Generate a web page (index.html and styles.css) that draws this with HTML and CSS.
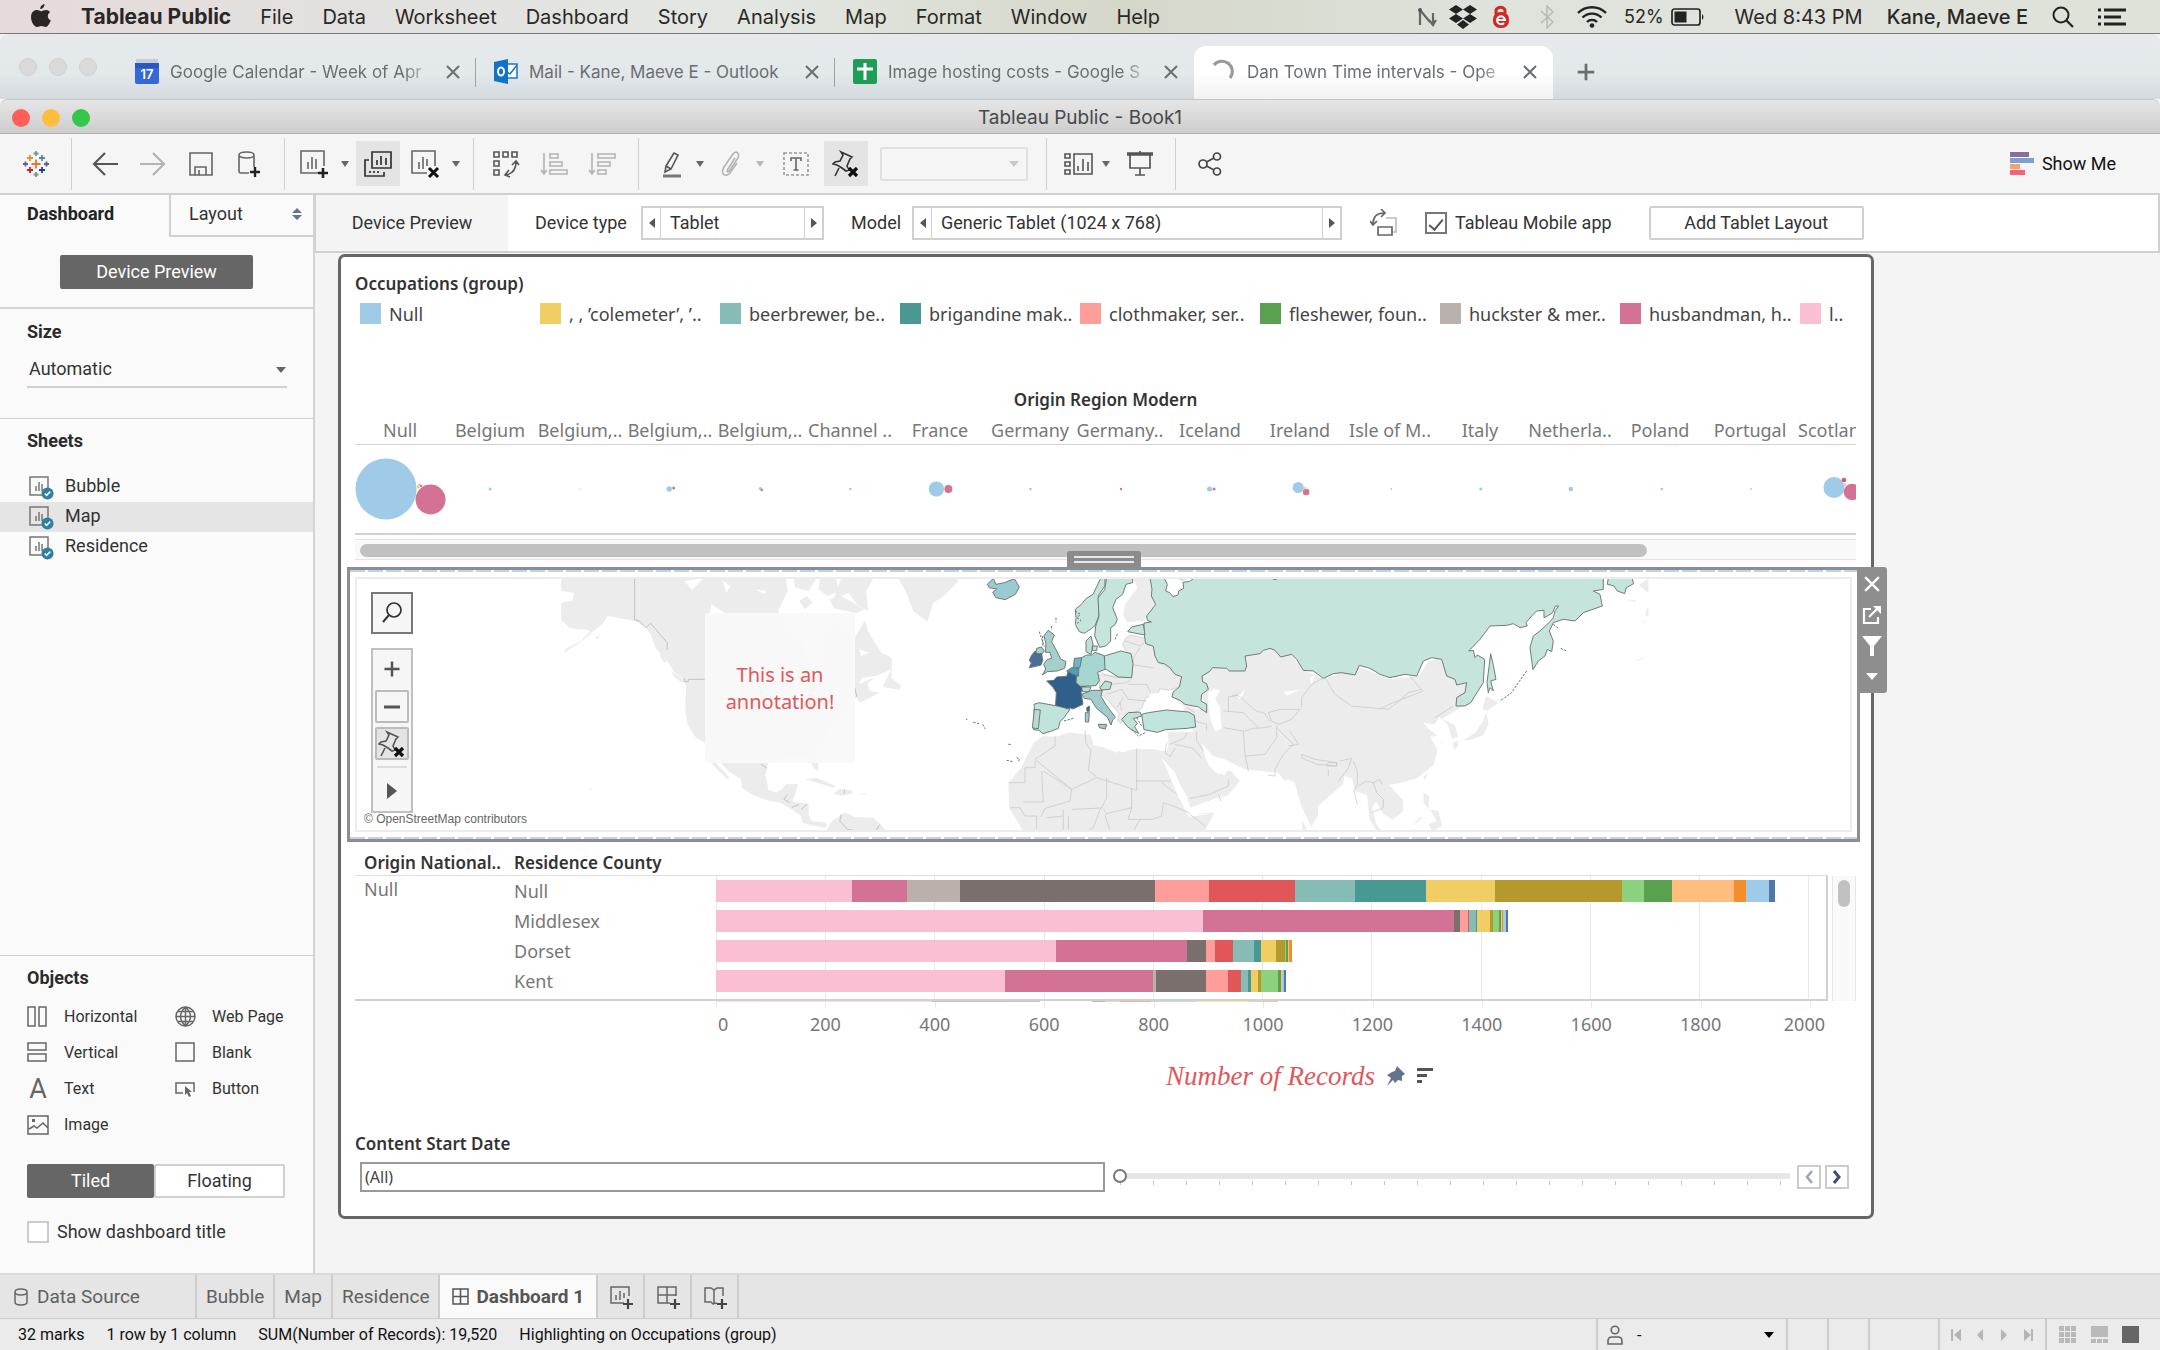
FILE: index.html
```html
<!DOCTYPE html>
<html lang="en">
<head>
<meta charset="utf-8">
<title>Tableau Public - Book1</title>
<link rel="stylesheet" href="styles.css">
</head>
<body>
<svg class="defs" aria-hidden="true">
  <symbol id="sheet" viewBox="0 0 24 24"><path d="M15 19H1V1h18v11M7 10v5M10 6v9M13 8v7" fill="none" stroke="currentColor" stroke-width="1.5"/></symbol>
  <symbol id="plus" viewBox="0 0 24 24"><path d="M12 3v18M3 12h18" fill="none" stroke="currentColor" stroke-width="3"/></symbol>
  <symbol id="close" viewBox="0 0 14 14"><path d="M1 1l12 12M13 1L1 13" fill="none" stroke="currentColor" stroke-width="2"/></symbol>
  <symbol id="pinx" viewBox="0 0 28 28"><path d="M9 2l11 5-2 2-3 7 2 4-3 1-4-3-5-3-4-1 2-2 5-1 3-6zM7 18l-4 8" fill="none" stroke="currentColor" stroke-width="1.6"/><path d="M17 18l8 8M25 18l-8 8" stroke="#111" stroke-width="3.2"/></symbol>
  <symbol id="tick" viewBox="0 0 14 14"><circle cx="7" cy="7" r="6.5" fill="#2f7fa3"/><path d="M4 7l2 2 4-4" fill="none" stroke="#fff" stroke-width="1.6"/></symbol>
</svg>

<header class="menubar">
  <svg class="apple" width="20" height="24" viewBox="0 0 20 24"><path d="M13.500 0c.2 2.500-1.700 5-4.200 5C9 2.700 11.200.4 13.500 0zM19 8.200c-3.200 2-2.700 6.700.8 8.100-.9 2.700-2.900 6.700-5.200 6.700-1.600 0-2.200-1-4.200-1s-2.600 1-4.200 1C3 23 0 17.500 0 13c0-4.600 3-7 5.800-7 1.800 0 3.200 1.200 4.400 1.200 1.100 0 2.800-1.300 5-1.200 1.600.1 2.900.8 3.800 2.200z" fill="#2b2624"/></svg>
  <nav class="menus">
    <b>Tableau Public</b><span>File</span><span>Data</span><span>Worksheet</span><span>Dashboard</span><span>Story</span><span>Analysis</span><span>Map</span><span>Format</span><span>Window</span><span>Help</span>
  </nav>
  <div class="tray">
    <svg width="20" height="20" viewBox="0 0 20 20"><path d="M3 18V4M3 3l10 12M16 6v10M12 13l4 5 3-5" fill="none" stroke="#666" stroke-width="2.200"/><circle cx="3" cy="3" r="2" fill="#555"/></svg>
    <svg class="t-drop" width="28" height="24" viewBox="0 0 28 24"><path d="M7 0l7 4.500L7 9 0 4.500zM21 0l7 4.500L21 9l-7-4.500zM7 9l7 4.500L7 18l-7-4.500zM21 9l7 4.500-7 4.500-7-4.500zM14 15l6 4.500-6 4.500-6-4.500z" fill="#222"/></svg>
    <svg class="t-e" width="18" height="24" viewBox="0 0 18 24"><path d="M4 9V5a5 5 0 0 1 9 0v3" fill="none" stroke="#cf2a27" stroke-width="3"/><rect x="1" y="7" width="16" height="16" rx="7" fill="#cf2a27"/><path d="M5 15h8a4 4 0 1 0-1 3" fill="none" stroke="#fff" stroke-width="2"/></svg>
    <svg class="t-bt" width="14" height="24" viewBox="0 0 14 24"><path d="M1 6l12 11-6 6V1l6 6L1 18" fill="none" stroke="#b6bab4" stroke-width="1.500"/></svg>
    <svg class="t-wifi" width="32" height="22" viewBox="0 0 32 22"><path d="M2 7a20 20 0 0 1 28 0M6.500 11.500a13.500 13.500 0 0 1 19 0M11 16a7 7 0 0 1 10 0" fill="none" stroke="#222" stroke-width="2.400"/><circle cx="16" cy="19.500" r="2.300" fill="#222"/></svg>
    <span class="t-pct">52%</span>
    <svg class="t-bat" width="34" height="18" viewBox="0 0 34 18"><rect x="1" y="1" width="28" height="16" rx="2.500" fill="none" stroke="#222" stroke-width="1.700"/><rect x="3.500" y="3.500" width="12" height="11" fill="#222"/><path d="M31 6q3 3 0 6z" fill="#222"/></svg>
    <span class="t-time">Wed 8:43 PM</span>
    <span class="t-user">Kane, Maeve E</span>
    <svg class="t-find" width="22" height="22" viewBox="0 0 22 22"><circle cx="9" cy="9" r="7.500" fill="none" stroke="#222" stroke-width="2"/><path d="M14.500 14.500L21 21" stroke="#222" stroke-width="2.200"/></svg>
    <svg width="28" height="18" viewBox="0 0 28 18"><path d="M0 2h3M6 2h22M0 9h3M6 9h17M0 16h3M6 16h22" stroke="#222" stroke-width="3"/></svg>
  </div>
</header>

<section class="browser">
  <div class="lights idle"><i></i><i></i><i></i></div>
  <div class="btab"><svg width="24" height="25" viewBox="0 0 24 25"><path d="M1 0h22v5H1z" fill="#c9ccd1"/><path d="M0 4h24v19a2 2 0 0 1-2 2H2a2 2 0 0 1-2-2z" fill="#3567d6"/><path d="M0 4h24v5H0z" fill="#2a56c6"/><text x="12" y="20" text-anchor="middle" class="cal">17</text></svg><span class="fade">Google Calendar - Week of Apr</span><svg class="x"><use href="#close"/></svg></div>
  <div class="btab"><svg width="24" height="25" viewBox="0 0 24 25"><path d="M13 5h10v14H13" fill="#fff" stroke="#1976c9" stroke-width="1.500"/><path d="M13 13l3 2 7-9" fill="none" stroke="#1976c9" stroke-width="1.500"/><path d="M0 3l14-3v25L0 22z" fill="#1073c8"/><ellipse cx="7" cy="12.500" rx="3" ry="4" fill="none" stroke="#fff" stroke-width="2"/></svg><span>Mail - Kane, Maeve E - Outlook</span><svg class="x"><use href="#close"/></svg></div>
  <div class="btab last"><svg width="24" height="25" viewBox="0 0 24 25"><rect width="24" height="25" rx="2" fill="#1f9d58"/><path d="M12 4v17M4 10h16" stroke="#fff" stroke-width="3"/></svg><span class="fade">Image hosting costs - Google S</span><svg class="x"><use href="#close"/></svg></div>
  <div class="btab active"><svg width="24" height="25" viewBox="0 0 24 25"><path d="M2 6a10 10 0 0 1 16 13" fill="none" stroke="#999" stroke-width="3"/></svg><span class="fade">Dan Town Time intervals - Ope</span><svg class="x"><use href="#close"/></svg></div>
  <svg class="newtab"><use href="#plus"/></svg>
</section>

<header class="titlebar"><div class="lights"><i></i><i></i><i></i></div><h1>Tableau Public - Book1</h1></header>

<div class="toolbar">
  <div class="group g1"><button aria-label="Start page"><svg width="26" height="26" viewBox="0 0 26 26" fill="none" stroke-width="1.800"><path d="M13 8.500v9M8.500 13h9" stroke="#e8762c"/><path d="M7 4v6M4 7h6" stroke="#eb912c"/><path d="M19 4v6M16 7h6" stroke="#59879b"/><path d="M7 16v6M4 19h6" stroke="#c72035"/><path d="M19 16v6M16 19h6" stroke="#1f457e"/><path d="M13 0v5M10.500 2.500h5M13 21v5M10.500 23.500h5" stroke="#7199a6"/><path d="M2.500 10.500v5M0 13h5M23.500 10.500v5M21 13h5" stroke="#5b6591"/></svg></button></div>
  <div class="group g2">
    <button aria-label="Undo"><svg width="26" height="24" viewBox="0 0 26 24"><path d="M26 12H2M13 1L2 12l11 11" fill="none" stroke="#555" stroke-width="2.200"/></svg></button>
    <button aria-label="Redo"><svg width="26" height="24" viewBox="0 0 26 24"><path d="M0 12h24M13 1l11 11-11 11" fill="none" stroke="#b3b3b3" stroke-width="2.200"/></svg></button>
    <button aria-label="Save"><svg width="24" height="24" viewBox="0 0 24 24"><path d="M1 1h22v22H1zM6 23v-8h11v8M10 18v5" fill="none" stroke="#666" stroke-width="1.600"/></svg></button>
    <button aria-label="New data source"><svg width="24" height="26" viewBox="0 0 24 26"><path d="M12 22H4q-2 0-2-2V4c0-4 15-4 15 0s-15 4-15 0M17 4v12" fill="none" stroke="#666" stroke-width="1.600"/><path d="M18 16v10M13 21h10" stroke="#222" stroke-width="2.400"/></svg></button>
  </div>
  <div class="group g3">
    <button class="mid" aria-label="New worksheet"><svg width="30" height="28" viewBox="0 0 30 28"><path d="M19 23H2V1h23v15M9 12v7M13 7v12M17 9v10" fill="none" stroke="#666" stroke-width="1.600"/><path d="M24 18v10M19 23h10" stroke="#222" stroke-width="2.600"/></svg></button><button class="caret" aria-label="More sheets"></button>
    <button class="mid on" aria-label="Duplicate"><svg width="28" height="26" viewBox="0 0 28 26"><path d="M8 1h19v16H8zM13 9v5M17 5v9M22 7v7M5 9H1v16h19v-4M6 20v2M10 20v2M14 20v2" fill="none" stroke="#333" stroke-width="1.700"/></svg></button>
    <button class="mid" aria-label="Clear sheet"><svg width="30" height="28" viewBox="0 0 30 28"><path d="M17 23H2V1h23v15M9 12v7M13 7v12M17 9v7" fill="none" stroke="#666" stroke-width="1.600"/><path d="M19 18l9 9M28 18l-9 9" stroke="#111" stroke-width="3"/></svg></button><button class="caret" aria-label="Clear options"></button>
  </div>
  <div class="group g4">
    <button aria-label="Swap rows and columns"><svg width="28" height="28" viewBox="0 0 28 28"><path d="M2 2h5v5H2zM11 2h5v5h-5zM20 2h5v5h-5zM2 11h5v5H2zM2 20h5v5H2zM24 12q0 11-10 13M20 15l4-4 3 4M17 20l-4 5 5 2" fill="none" stroke="#555" stroke-width="1.600"/></svg></button>
    <button aria-label="Sort ascending"><svg width="28" height="24" viewBox="0 0 28 24"><path d="M4 1v20M1 18l3 4 3-4M10 2h8v4h-8zM10 10h12v4H10zM10 18h17v4H10z" fill="none" stroke="#b3b3b3" stroke-width="1.600"/></svg></button>
    <button aria-label="Sort descending"><svg width="28" height="24" viewBox="0 0 28 24"><path d="M4 1v20M1 18l3 4 3-4M10 2h17v4H10zM10 10h12v4H10zM10 18h8v4h-8z" fill="none" stroke="#b3b3b3" stroke-width="1.600"/></svg></button>
  </div>
  <div class="group g5">
    <button class="slim" aria-label="Highlight"><svg width="22" height="28" viewBox="0 0 22 28"><path d="M6 16L14 3l4 2-7 14-6 3zM6 16l5 3" fill="none" stroke="#555" stroke-width="1.600"/><path d="M3 26h18" stroke="#777" stroke-width="3"/></svg></button><button class="caret" aria-label="Highlight options"></button>
    <button class="slim" aria-label="Group"><svg width="20" height="26" viewBox="0 0 20 26"><path d="M14 7L7 18c-2 3 0 4 2 1l8-12c2-5-2-8-5-4L3 16c-4 7 2 11 6 6l7-10" fill="none" stroke="#b3b3b3" stroke-width="1.600"/></svg></button><button class="caret dim" aria-label="Group options"></button>
    <button aria-label="Show labels"><svg width="26" height="24" viewBox="0 0 26 24"><rect x="1" y="1" width="24" height="22" fill="none" stroke="#999" stroke-width="1.600" stroke-dasharray="3 2"/><path d="M8 9V6h10v3M13 6v12M10.500 18h5" fill="none" stroke="#666" stroke-width="1.600"/></svg></button>
    <button class="mid on" aria-label="Unpin axes"><svg width="28" height="28"><use href="#pinx"/></svg></button>
    <div class="fit"><select aria-label="Fit" disabled><option></option></select></div>
  </div>
  <div class="group g6">
    <button class="slim" aria-label="Show cards"><svg width="30" height="22" viewBox="0 0 30 22"><path d="M1 1h5v4H1zM1 9h5v4H1zM1 17h5v4H1zM10 1h18v20H10zM14 13v5M19 6v12M24 9v9" fill="none" stroke="#555" stroke-width="1.600"/></svg></button><button class="caret" aria-label="Card options"></button>
    <button aria-label="Presentation mode"><svg width="26" height="26" viewBox="0 0 26 26"><path d="M0 3h26" stroke="#555" stroke-width="3.500"/><path d="M3 4v13h20V4M13 0v2M13 17v7M8 24h10" fill="none" stroke="#555" stroke-width="1.700"/></svg></button>
  </div>
  <div class="group g7"><button aria-label="Share"><svg width="24" height="24" viewBox="0 0 24 24" fill="none" stroke="#444" stroke-width="1.700"><circle cx="5" cy="12" r="4"/><circle cx="19" cy="4.500" r="3.500"/><circle cx="19" cy="19.500" r="3.500"/><path d="M8.500 10l7.500-4M8.500 14l7.500 4"/></svg></button></div>
  <button class="showme"><svg width="24" height="24" viewBox="0 0 24 24"><path d="M0 0h19v5H0z" fill="#8a6d9b"/><path d="M0 6h24v5H0z" fill="#7ba2cd"/><path d="M0 12h10v5H0z" fill="#f9a073"/><path d="M0 18h15v5H0z" fill="#fb6277"/></svg>Show Me</button>
</div>

<main class="main">
  <aside class="side">
    <div class="ptabs"><button class="ptab cur">Dashboard</button><button class="ptab">Layout<svg width="10" height="12" viewBox="0 0 10 12"><path d="M0 5l5-5 5 5zM0 7h10l-5 5z" fill="#64748b"/></svg></button></div>
    <section class="pv"><button class="dark wide">Device Preview</button></section>
    <section class="size"><h2><label for="size">Size</label></h2><select id="size"><option>Automatic</option></select></section>
    <section class="sheets"><h2>Sheets</h2>
      <ul>
        <li><span class="sicon"><svg width="24" height="24"><use href="#sheet"/></svg><svg class="ok"><use href="#tick"/></svg></span>Bubble</li>
        <li class="sel"><span class="sicon"><svg width="24" height="24"><use href="#sheet"/></svg><svg class="ok"><use href="#tick"/></svg></span>Map</li>
        <li><span class="sicon"><svg width="24" height="24"><use href="#sheet"/></svg><svg class="ok"><use href="#tick"/></svg></span>Residence</li>
      </ul>
    </section>
    <section class="objects"><h2>Objects</h2>
      <ul>
        <li><svg width="22" height="22" viewBox="0 0 22 22"><path d="M1 1h7v19H1zM12 1h7v19h-7z"/></svg>Horizontal</li>
        <li><svg width="22" height="22" viewBox="0 0 22 22"><circle cx="10.500" cy="10.500" r="9.500"/><path d="M10.500 1v19M1 10.500h19M3 5.500h15M3 15.500h15M10.500 1q-10 9.500 0 19M10.500 1q10 9.500 0 19"/></svg>Web Page</li>
        <li><svg width="22" height="22" viewBox="0 0 22 22"><path d="M1 1h18v7H1zM1 12h18v7H1z"/></svg>Vertical</li>
        <li><svg width="22" height="22" viewBox="0 0 22 22"><path d="M1 1h18v18H1z"/></svg>Blank</li>
        <li><span class="glyph">A</span>Text</li>
        <li><svg width="22" height="22" viewBox="0 0 22 22"><path d="M8 15H1V5h18v9"/><path d="M10 8v9l2-2 2 4 2-1-2-4h3z" fill="#666" stroke="none"/></svg>Button</li>
        <li><svg width="22" height="22" viewBox="0 0 22 22"><path d="M1 2h20v18H1zM2 15l5-3 3 2 6-5 5 5"/><path d="M5 5h3v3H5z" fill="#666" stroke="none"/></svg>Image</li>
      </ul>
      <div class="seg"><button class="dark">Tiled</button><button class="light">Floating</button></div>
      <label class="check"><input type="checkbox">Show dashboard title</label>
    </section>
  </aside>

  <div class="work">
    <div class="device">
      <div class="dlabel">Device Preview</div>
      <span class="dtype">Device type</span>
      <div class="stepper s1"><button aria-label="Previous device"></button><span>Tablet</span><button class="next" aria-label="Next device"></button></div>
      <span class="dmodel">Model</span>
      <div class="stepper s2"><button aria-label="Previous model"></button><span>Generic Tablet (1024 x 768)</span><button class="next" aria-label="Next model"></button></div>
      <svg class="rotate" width="28" height="28" viewBox="0 0 28 28"><path d="M16 9h10v14h-3" fill="none" stroke="#bbb" stroke-width="1.600"/><path d="M8 18h14v8H8zM3 15Q3 4 14 4M0 12l3 4 4-4M11 0l4 4-4 4" fill="none" stroke="#666" stroke-width="1.700"/></svg>
      <label class="check"><input type="checkbox" checked>Tableau Mobile app</label>
      <button class="light add">Add Tablet Layout</button>
    </div>

    <div class="frame">
      <h3>Occupations (group)</h3>
      <ul class="legend">
        <li><i class="sky"></i>Null</li><li><i class="gold"></i>, , ’colemeter’, ’..</li><li><i class="aqua"></i>beerbrewer, be..</li><li><i class="teal"></i>brigandine mak..</li><li><i class="salmon"></i>clothmaker, ser..</li><li><i class="green"></i>fleshewer, foun..</li><li><i class="stone"></i>huckster &amp; mer..</li><li><i class="rose"></i>husbandman, h..</li><li><i class="pink"></i>l..</li>
      </ul>

      <section class="bubbles">
        <h3>Origin Region Modern</h3>
        <div class="regions"><span>Null</span><span>Belgium</span><span>Belgium,..</span><span>Belgium,..</span><span>Belgium,..</span><span>Channel ..</span><span>France</span><span>Germany</span><span>Germany..</span><span>Iceland</span><span>Ireland</span><span>Isle of M..</span><span>Italy</span><span>Netherla..</span><span>Poland</span><span>Portugal</span><span>Scotland</span></div>
        <svg class="dots" height="88" viewBox="355 445 1500 88" preserveAspectRatio="xMinYMid slice">
          <g fill="#a0cbe8"><circle cx="386" cy="489" r="30.500"/><circle cx="490" cy="489" r="1.500"/><circle cx="669" cy="489" r="2.700"/><circle cx="760" cy="488.500" r="1.600"/><circle cx="850" cy="489" r="1.300"/><circle cx="936" cy="489" r="7.600"/><circle cx="1030" cy="489" r="1.300"/><circle cx="1209" cy="489" r="2.500"/><circle cx="1297.500" cy="487.500" r="5.500"/><circle cx="1480" cy="489" r="1.500"/><circle cx="1570" cy="489" r="2.300"/><circle cx="1661" cy="489" r="1.300"/><circle cx="1833" cy="487.500" r="10.500"/></g>
          <g fill="#d37295"><circle cx="430.500" cy="499.500" r="15"/><circle cx="673.500" cy="488" r="1.500"/><circle cx="761.500" cy="490" r="1.300"/><circle cx="948" cy="489" r="4"/><circle cx="1120.500" cy="489" r="1.200"/><circle cx="1213.500" cy="489" r="1.500"/><circle cx="1305.500" cy="492" r="3.300"/><circle cx="1851" cy="492" r="8.300"/><circle cx="1390.500" cy="489" r=".7"/><circle cx="1750" cy="489" r=".7"/><circle cx="580" cy="489" r=".5"/></g>
          <circle cx="418" cy="487" r="1.500" fill="#f1ce63"/><circle cx="419.500" cy="485" r="1.800" fill="#fabfd2"/><circle cx="421" cy="486" r="1" fill="#e15759"/><circle cx="1303.500" cy="488" r="1.500" fill="#f1ce63"/><circle cx="1843" cy="480" r="2.300" fill="#e15759"/><circle cx="1844" cy="484.500" r="1.500" fill="#fabfd2"/>
        </svg>
        <div class="hscroll"><i></i></div>
      </section>

      <section class="mapframe">
        <div class="drag"></div>
        <div class="dash"><div class="map">
          <svg class="world" height="251" viewBox="357 578 1493 251" preserveAspectRatio="xMidYMid slice">
            <g transform="translate(340 560) scale(.38265 .33333)">
              <g fill="#ececec">
                <path d="M578 50H1165L1170 90 1145 150 1165 200 1210 240 1230 330 1270 290 1260 230 1290 190 1345 230 1372 178 1380 210 1395 240 1415 275 1442 290 1442 325 1400 345 1365 350 1355 370 1385 355 1395 352 1378 368 1385 390 1412 395 1385 410 1358 425 1350 410 1335 420 1320 440 1290 480 1265 540 1238 570 1250 605 1250 630 1238 622 1225 590 1170 590 1118 605 1112 640 1120 688 1140 694 1155 685 1165 670 1197 668 1190 700 1182 722 1225 728 1225 760 1232 780 1270 785 1272 800 1240 795 1208 785 1205 765 1180 745 1150 725 1115 718 1075 700 1050 680 1048 655 1015 630 975 580 985 610 1018 650 1012 655 990 630 970 605 955 560 953 545 930 530 908 490 902 450 905 375 895 352 875 335 855 300 825 262 812 220 795 195 770 180 700 165 685 190 660 212 640 235 585 275 590 262 630 240 655 210 640 205 620 205 600 200 578 178V125L608 118 612 95 578 90Z"/>
                <path d="M1185 50h60l-20 40-35-10zM1255 50h40l10 40-30 15-25-20zM1310 50h85l-20 40 5 60-30-20-20-35-40 20 10-30zM1280 115l30-10 60 40-20 12-60-15zM1200 120l20-15 15 20-20 20zM1458 50l20 40 20 60 37 32 15-55 30-25 35-40V50zM1418 378l25-58-2 32 26 22-5 12zM1215 655l30-5 50 25-5 5-40-14zM1290 698l15-14 32 4 3 10-30 6zM1270 811l15-30 35-27 25 14 48 2 20 20 15 21zM840 275l12 25-4 5-12-20zM865 330l35 28-5 8-22-18zM650 680l8 3-2 6zM622 660l4 2M1360 698h15v3h-15zM1265 632l4 4M665 230l15-10-5 15z"/>
              </g>
              <path d="M900 60l50-8-30 35zM1000 60l20 15-10 20zM970 130l35 25-40 10zM1085 85l30 5-5 10zM1358 265l25 10-22 10z" fill="#fff"/>
              <path d="M770 50V176L782 180 800 200 812 187 855 245V266M900 352v10h10V355H953M1100 610l16 12M1345 380l6 28M1170 700l-10 15 15 10M1180 740l20-10M1205 745l15-15M1318 685v12M1310 760l-4 20 20 25 25 5M1400 811l10-20" fill="none" stroke="#bdbdbd" stroke-width="2.500"/>
            </g>
            <g transform="translate(940 560) scale(.33333)">
              <g fill="#ececec" stroke="#c6c6c6" stroke-width="2">
                <path stroke="none" d="M578 50H632L636 100 646 130 622 165 612 180 560 184 550 160 556 130 592 80z"/>
                <path d="M556 232l15-10 45 10 35 30 10 45 64 38-2 30-35 13-28-5-5 12 10 12-28-5-20 10-12 30-20 12-30 5-12 28-10-8 5-20-32-40-26-22-4-56 60 5 40-5 5-50-25-24-8-15z"/>
                <path stroke="none" d="M700 405l35 25 65 25-15-55-5-50 40-30 90 10 5-45 75-23 65 20 35 45 60 27 105-37 95 37 60-5 30-8 25-40 35-10 30 8 20 50 55 20-30 45-10 25-60 35 40 18 10 35-18 8-15-45-24-22-14 22-34-5 15 18 28 22-22 2 22 40-12 45-50 40-50 14-35 5 42 45 2 35-32 25-30-20-20-35-13 20 15 50 18 25h-14l-25-40-8-75-35-10-10-38-22-8-5 25-75 65v30l-20 33-30-63-20-70-20-10-10 5-20-25-50-5-50-5-60-30-35-10-40-45-30-45V470z"/>
                <path stroke="none" d="M685 512h90l20 73 12 30 28 25 35-12 30 32-35 42-110 48-15-45-40-70-28-50z"/>
                <path stroke="none" d="M308 525l40 2 60-20 40-2 12 40 70 30 28-28 120 20 20 70 30 65 24 58 72-6-30 57H250l-42-70-3-75 38-45 38-76z"/>
                <path stroke="none" d="M1085 780l15 20-5 11h-8zM1342 685l18-5-5 12zM1460 635l4-5-8 28-6-8z"/>
                <g stroke="none" transform="translate(1320)"><path d="M318 405l38 20-35 25-14-5zM318 452l8 35-15 35-40 15-20 0 35-22 25-38zM232 538l-14 8 5 20 12-10zM182 545h6l-3 4zM130 695l18 10-2 40-15-20zM150 745l25 5 12 45-30 15-12-20 25-10zM105 785l18-20 3 5-18 18zM95 811l10-8 2 8zM740 118l28 0-2 6zM805 52l-28 20 28 25zM805 135l-10 25 10 10zM785 180l14 2-4 5zM770 298l25-12-10 8-15 6zM698 315l6 1-4 2z"/></g>
              </g>
              <path d="M620 440l10-40 30-5 10 14 25-2 40 33-50 8h-45zM805 395l15-12 20 5-15 25 15 25 5 65-20 8-15-40-5-40zM890 400l25-12-15 30zM1030 392l50-6-40 18zM665 590l40 45 45 105 110-40-108 60 70-3-75 10-32-60zM795 585l35 35 38 0-15 22-30-10zM1110 350l15-8-10 30zM340 515l100-12 45 10 200 5 0 40-5 14-40-8-60 0-30 10-90-22-5-30-75-8z" fill="#fff"/>
              <path d="M345 525v30l-60 40 110 90 75-35 120 38V562M435 508l3 40 15 20-8 60 25 20M285 600v20h-30v45h-48M305 630l5 93h-60M310 630l85 55-5 35-75 22-12 25M395 745l90-4 15-30V650M575 680v60l-75 18-10-15M587 660h105M665 665l45 35M575 740l-10 35h70l30-10 5-40 35 12 45 20M370 745v66M385 765l0 46M210 740h30l15 25h35v40M320 770l50-5M480 745l-20 55-20 11M495 760l15 50M600 775l-20 36M750 760l45 35M690 550l45-20 5-15M705 550l55 12 25 30M750 712l60-12 55-25 0-20M835 700l8 20M750 475l50 15 0 20M770 512v28l20 30M850 500l60 10 5 70 10 50M915 510l25-8 35-2 20-5M915 585l60-5 35-50 0-35M865 450v-42l30-5 50 45 30 10 15 25M850 450l60 5 45 45M985 455l35-10 60 0-25 30-40 15-20-10zM1085 440v-30l30-40 35-20M1155 350l30 50 50 35 110 10 40-30 65-25M1010 500l50 50-30 30-25 45 0 20-20-2M1050 510l25 40-30 5M1085 580l40 15 65 10v10l-60-5-45-20zM1165 605h25v10h-30zM1200 600l35-8-10 30-20 25-10 15M1165 625l0 20M1240 600l12 30 0 40-10 20 10 40M1255 675l25-15 20 5 10 30 20 20v25l-35 15M1300 665l20-10 5 15M1410 345l25 30 10 10-40 10-25 22-60 25M1485 470l55-35M680 545l-5 30 15 12 15-25M555 240l45 15 12-10M580 290l20-30M580 312l60 8M480 335l45 15 50 0M515 370l45-5 15-10M565 370l55 0 12 25M500 400l45-15 20 30 55 5M530 440l20-30M545 450l-5-25M905 395l-30 10M740 440l25 15" fill="none" stroke="#bdbdbd" stroke-width="1.800"/>
              <g stroke="#69726f" stroke-width="2.800" stroke-linejoin="round">
                <path fill="#c5e5dc" d="M630 50L636 85 634 105 647 130 632 150 620 165 622 178 634 183 612 186 612 215 617 248 640 256 645 285 655 305 672 308 690 320 705 340 725 347 718 378 700 392 696 408 720 418 735 430 775 438 800 455 800 430 783 420 785 400 805 385 800 368 788 362 786 345 808 332 818 320 860 322 868 330 915 330 920 315 915 285 960 278 970 268 990 262 1005 268 1022 288 1055 280 1070 295 1090 328 1120 330 1150 352 1180 338 1205 335 1245 342 1258 313 1290 322 1320 340 1350 350 1395 340 1430 345 1450 300 1475 290 1505 295 1520 345 1545 355 1550 372 1580 365 1575 395 1550 410 1548 435 1575 435 1592 425 1630 365 1634 295 1612 282 1605 290 1600 268 1586 270 1620 235 1650 195 1700 193 1720 188 1740 200 1762 195 1758 185 1775 165 1790 150 1812 148 1812 170 1822 165 1838 155 1846 135 1856 135 1845 150 1840 170 1830 182 1800 210 1780 225 1770 260 1779 326 1795 300 1815 285 1822 265 1835 272 1840 240 1828 210 1840 185 1870 175 1905 180 1930 155 1987 135 1980 100 1960 90 1990 85V50Z"/>
                <path fill="#c5e5dc" d="M2005 50l-3 20 20 5 10 15 22 8 5-18 22-12-5-18zM1652 278l8 35 8 42-16 5 8 30-10-10-5 15-4-30z"/>
                <path fill="#fff" d="M672 50l10 20-5 20 12 5 10 12 15-5 2-12 15-8-2-18 20-3 15-11zM990 50l15 6 15-6z"/>
                <path fill="#c5e5dc" d="M706 50l20 10 24-10z" stroke="none"/>
                <path fill="#c5e5dc" d="M483 50l-12 25-12 25-20 12-15 18-18 15 2 25-2 20 12 22 15 5 22-15 10-8 12-30-2-60 20-30V50z"/>
                <path fill="#c5e5dc" d="M500 50h78v15l-20 5-10 30-20 15-10 25 14 35-6 15-14 10 0 40-15 15-18 4-15-35 3-28 10-30-3-55 20-25z"/>
                <path fill="#9acad2" d="M142 70l18-18 8 18 25-5 30-12 15 25-12 22-30 16-28-6-10-16 12-10-22-4z"/>
                <path fill="#a5cfcb" d="M325 208l18 14-8 20 12 22 15 30 16 8-4 20-22 8-30 2-15 10 10-18-6-14 10-14 14-4-5-18-14 0 2-25-6-25z"/>
                <path fill="#a5cfcb" d="M290 262l15-4 8 12-8 10-18 0z"/><path fill="#4a6d99" d="M285 270l8 8h12l3 20-5 14-15 4-20 4 6-14-6-8 6-14z"/>
                <path fill="#305f8b" d="M320 360l22-2 8-10 30-2 5-18 20 12 32 20-2 22-12 10 6 38-30 14-10-4-5 10-38-5 3-50-10-16z"/>
                <path fill="#c0e4db" d="M282 430l15-5 55 10 38 10-18 25-12 12-5 20-20 8-26 8-12-10-16-2 2-70z"/><path fill="#b5dcd3" d="M283 445l18 2-6 56-18-2z"/>
                <path fill="#a5d7d0" d="M425 290l15-8 15 0 10-8 28 10 5 40-25 10 5 25-10 15-48 2-12-12 5-60z"/>
                <path fill="#6fb3c4" d="M403 292l22-2-5 28-20 6z"/><path fill="#4f9fba" d="M380 330l15-10 22 2-2 24-20-8z"/>
                <path fill="#bfe6dc" d="M493 285l50-15 30 8 6 30-4 42-40-2-40-25z"/>
                <path fill="#bcdfd7" d="M438 240l15-15 6 25-6 30-15-8zM457 255l15 0-2 14-12 0zM480 380l15-20 20 5-5 20-25 2zM425 378h28l-6 14-20 0z"/>
                <path fill="#a1ccca" d="M425 400l30-12 32 0-4 18 15 25 28 38-8 8-5 15-10-22-35-30-15-25-20-3zM475 490l25 0-4 14-18-4zM436 455l12 0-2 28-10 0z"/><path fill="#305f8b" d="M440 440l8-5v16h-7z"/>
                <path fill="#bfe2d9" d="M545 475l20-20 35-2 5 12-25 8 12 14-8 10 12 20-20-10-14-10z"/>
                <path fill="#c0e5dc" d="M605 460l20-5 55-8 65 6 18 10 4 35-25 4-65 4-25 8-40-8z"/>
                <path fill="#c5e5dc" d="M575 198l35-8 5 32-32-6-20-4z"/>
              </g>
              <path d="M348 170v14M335 195v12M298 212l15 45M308 225v28M230 590l10 6-8 6M200 598l20 4M78 475h4M100 484l18 4M128 490l8 14M205 550h10M372 480l28-8M405 150l16 10-10 10 12 8-12 10M575 505l20 20 20-10M590 470l15 25M1760 330l-25 35-20 30-35 25M1862 262l20 9M1840 190l15 12M525 235l8-18" fill="none" stroke="#6a6f6e" stroke-width="3" stroke-dasharray="7 4"/>
            </g>
          </svg>
          <div class="note">This is an annotation!</div>
          <div class="controls">
            <button class="search" aria-label="Search map"><svg width="22" height="22" viewBox="0 0 22 22"><circle cx="13" cy="8" r="7" fill="none" stroke="#333" stroke-width="1.700"/><path d="M8 13l-6 7" stroke="#333" stroke-width="2"/></svg></button>
            <div class="zoom">
              <button aria-label="Zoom in"><svg width="20" height="20"><use href="#plus"/></svg></button>
              <button class="box" aria-label="Zoom out"><svg width="16" height="4"><path d="M0 2h16" stroke="#555" stroke-width="3"/></svg></button>
              <button class="box pressed" aria-label="Reset map"><svg width="28" height="28"><use href="#pinx"/></svg></button>
              <hr>
              <button aria-label="Map tools"><svg width="10" height="16"><path d="M0 0l10 8-10 8z" fill="#555"/></svg></button>
            </div>
          </div>
          <small>© OpenStreetMap contributors</small>
        </div></div>
        <div class="actions">
          <button aria-label="Remove"><svg width="16" height="16"><use href="#close"/></svg></button>
          <button aria-label="Go to sheet"><svg width="20" height="20" viewBox="0 0 20 20"><path d="M9 4H2v14h14v-6M7 12l9-9" fill="none" stroke="#fff" stroke-width="2.200"/><path d="M11 1h8v8z" fill="#fff"/></svg></button>
          <button aria-label="Use as filter"><svg width="20" height="20" viewBox="0 0 20 20"><path d="M0 0h20l-8 10v10H8V10z" fill="#fff"/></svg></button>
          <button aria-label="More options"><svg width="12" height="7"><path d="M0 0h12L6 7z" fill="#fff"/></svg></button>
        </div>
      </section>

      <section class="res">
        <div class="rhead"><h3>Origin National..</h3><h3>Residence County</h3></div>
        <div class="rbody">
          <div class="rlabels"><span>Null</span><ul><li>Null</li><li>Middlesex</li><li>Dorset</li><li>Kent</li></ul></div>
          <div class="plot">
            <div class="bar"><i class="pink" style="flex:136"></i><i class="rose" style="flex:55"></i><i class="stone" style="flex:53"></i><i class="slate" style="flex:195"></i><i class="salmon" style="flex:54"></i><i class="red" style="flex:87"></i><i class="aqua" style="flex:60"></i><i class="teal" style="flex:71"></i><i class="gold" style="flex:69"></i><i class="olive" style="flex:127"></i><i class="lime" style="flex:22"></i><i class="green" style="flex:28"></i><i class="peach" style="flex:62"></i><i class="orange" style="flex:12"></i><i class="sky" style="flex:23"></i><i class="blue" style="flex:6"></i><i style="flex:51"></i></div>
            <div class="bar"><i class="pink" style="flex:487"></i><i class="rose" style="flex:252"></i><i class="slate" style="flex:6"></i><i class="salmon" style="flex:8"></i><i class="red" style="flex:1"></i><i class="aqua" style="flex:7"></i><i class="teal" style="flex:1"></i><i class="gold" style="flex:13"></i><i class="olive" style="flex:3"></i><i class="lime" style="flex:6"></i><i class="green" style="flex:2"></i><i class="peach" style="flex:1"></i><i class="orange" style="flex:1"></i><i class="sky" style="flex:3"></i><i class="blue" style="flex:2"></i><i style="flex:318"></i></div>
            <div class="bar"><i class="pink" style="flex:340"></i><i class="rose" style="flex:131"></i><i class="slate" style="flex:19"></i><i class="salmon" style="flex:9"></i><i class="red" style="flex:18"></i><i class="aqua" style="flex:21"></i><i class="teal" style="flex:7"></i><i class="gold" style="flex:16"></i><i class="olive" style="flex:9"></i><i class="lime" style="flex:1"></i><i class="green" style="flex:2"></i><i class="peach" style="flex:1"></i><i class="orange" style="flex:3"></i><i style="flex:534"></i></div>
            <div class="bar"><i class="pink" style="flex:289"></i><i class="rose" style="flex:148"></i><i class="stone" style="flex:3"></i><i class="slate" style="flex:50"></i><i class="salmon" style="flex:22"></i><i class="red" style="flex:13"></i><i class="aqua" style="flex:7"></i><i class="teal" style="flex:3"></i><i class="gold" style="flex:7"></i><i class="olive" style="flex:3"></i><i class="lime" style="flex:17"></i><i class="green" style="flex:3"></i><i class="peach" style="flex:1"></i><i class="sky" style="flex:2"></i><i class="blue" style="flex:2"></i><i style="flex:541"></i></div>
          </div>
          <div class="vscroll"><i></i></div>
        </div>
        <div class="afoot">
          <div class="bar sliver"><i class="pink" style="flex:215"></i><i class="rose" style="flex:109"></i><i style="flex:52"></i><i class="slate" style="flex:13"></i><i class="salmon" style="flex:15"></i><i class="red" style="flex:30"></i><i class="aqua" style="flex:46"></i><i class="gold" style="flex:52"></i><i class="lime" style="flex:14"></i><i class="orange" style="flex:16"></i><i style="flex:550"></i></div>
        </div>
        <div class="axis"><span>0</span><span>200</span><span>400</span><span>600</span><span>800</span><span>1000</span><span>1200</span><span>1400</span><span>1600</span><span>1800</span><span>2000</span></div>
        <div class="atitle"><em>Number of Records</em>
          <svg width="20" height="20" viewBox="0 0 20 20"><path d="M11 0l8 8-3 2 0 5-4-1-3 3-2-3-6 6 4-8-4-3 5-3 3-1z" fill="#64748b"/></svg>
          <svg width="16" height="16" viewBox="0 0 16 16"><path d="M0 0h16v3H0zM0 6h10v3H0zM0 12h5v3H0z" fill="#555"/></svg>
        </div>
      </section>

      <section class="date">
        <h3><label for="date">Content Start Date</label></h3>
        <div class="drow"><input id="date" type="text" value="(All)"><input class="range" type="range" min="0" max="20" value="0" aria-label="Start date position"><button aria-label="Previous date"><svg width="8" height="14" viewBox="0 0 8 14"><path d="M7 1L2 7l5 6" fill="none" stroke="#9aa4b2" stroke-width="2.500"/></svg></button><button aria-label="Next date"><svg width="8" height="14" viewBox="0 0 8 14"><path d="M1 1l5 6-5 6" fill="none" stroke="#3f5068" stroke-width="3"/></svg></button></div>
      </section>
    </div>
  </div>
</main>

<nav class="stabs">
  <button class="src"><svg width="14" height="18" viewBox="0 0 14 18"><path d="M1 4v10q0 3 6 3t6-3V4c0-4-12-4-12 0s12 4 12 0" fill="none" stroke="#666" stroke-width="1.500"/></svg>Data Source</button>
  <button>Bubble</button><button>Map</button><button>Residence</button>
  <button class="cur"><svg width="17" height="17" viewBox="0 0 17 17"><path d="M1 1h15v15H1zM8.500 1v15M1 8.500h15" fill="none" stroke="#555" stroke-width="1.500"/></svg>Dashboard 1</button>
  <button class="new" aria-label="New worksheet"><svg width="24" height="24" viewBox="0 0 24 24"><path d="M15 18H2V2h18v9M7 10v5M11 6v9M15 8v5" fill="none" stroke="#666" stroke-width="1.500"/><path d="M19 14v10M14 19h10" stroke="#444" stroke-width="2.200"/></svg></button>
  <button class="new" aria-label="New dashboard"><svg width="24" height="24" viewBox="0 0 24 24"><path d="M14 18H2V2h18v9M11 2v16M2 10h18" fill="none" stroke="#666" stroke-width="1.500"/><path d="M19 14v10M14 19h10" stroke="#444" stroke-width="2.200"/></svg></button>
  <button class="new" aria-label="New story"><svg width="24" height="24" viewBox="0 0 24 24"><path d="M14 18l-4 1-2-2H2V3h6l3 2 3-2h6v8M11 5v13" fill="none" stroke="#666" stroke-width="1.500"/><path d="M19 14v10M14 19h10" stroke="#444" stroke-width="2.200"/></svg></button>
</nav>

<footer class="status">
  <p>32 marks</p><p>1 row by 1 column</p><p>SUM(Number of Records): 19,520</p><p>Highlighting on Occupations (group)</p>
  <div class="cell user"><svg width="16" height="20" viewBox="0 0 16 20" fill="none" stroke="#666" stroke-width="1.600"><circle cx="8" cy="5" r="3.800"/><path d="M1 19v-3q0-4 4-4h6q4 0 4 4v3z"/></svg><span>-</span><svg width="10" height="6"><path d="M0 0h10L5 6z"/></svg></div>
  <div class="cell c40"></div><div class="cell c40"></div><div class="cell c70"></div>
  <div class="cell pager"><svg width="82" height="12" viewBox="0 0 82 12" fill="#b5b5b5"><path d="M0 0h2v12H0zM10 0v12L3 6zM32 0v12l-6-6zM50 0v12l6-6zM73 0v12l7-6zM80 0h2v12h-2z"/></svg></div>
  <div class="cell views"><svg width="80" height="18" viewBox="0 0 80 18" fill="#b9b9b9"><path d="M0 0h5v5H0zM6 0h5v5H6zM12 0h5v5h-5zM0 6h5v5H0zM6 6h5v5H6zM12 6h5v5h-5zM0 12h5v5H0zM6 12h5v5H6zM12 12h5v5h-5zM32 0h17v11H32zM32 13h5v4h-5zM38 13h5v4h-5zM44 13h5v4h-5z"/><path d="M63 0h17v17H63z" fill="#666"/></svg></div>
</footer>
</body>
</html>
```
FILE: styles.css
```css
* { box-sizing: border-box; }
body {
  margin: 0;
  min-height: 100vh;
  display: flex;
  flex-direction: column;
  font: 18px/24px Roboto, sans-serif;
  color: #333;
  background: #f4f4f4;
}
h1, h2, h3, p, ul { margin: 0; padding: 0; font-size: inherit; }
li { list-style: none; }
svg { display: block; flex: none; }
button, input, select { font: inherit; color: inherit; margin: 0; border-radius: 0; }
button { padding: 0; border: 0; background: none; display: flex; align-items: center; justify-content: center; }
.defs { position: absolute; width: 0; height: 0; }

.pink { background: #fabfd2; }
.rose { background: #d37295; }
.stone { background: #bab0ac; }
.slate { background: #79706e; }
.salmon { background: #ff9d9a; }
.red { background: #e15759; }
.aqua { background: #86bcb6; }
.teal { background: #499894; }
.gold { background: #f1ce63; }
.olive { background: #b6992d; }
.lime { background: #8cd17d; }
.green { background: #59a14f; }
.peach { background: #ffbe7d; }
.orange { background: #f28e2b; }
.sky { background: #a0cbe8; }
.blue { background: #4e79a7; }

/* System menu bar */
.menubar {
  height: 34px;
  display: flex;
  align-items: center;
  padding: 0 34px 0 31px;
  font: 20px/24px Inter, sans-serif;
  color: #2a2826;
  background: linear-gradient(90deg, #e6dada, #e2e1df 16%, #e3e7e2 35%, #d5d7c9 52%, #dfe3dc 70%, #dfe2d9);
  border-bottom: 1px solid #777;
}
.apple { margin: 0 30px 2px 0; }
.menus { display: flex; gap: 29px; white-space: nowrap; }
.menus b { font-weight: 700; font-size: 21px; }
.tray { margin-left: auto; display: flex; align-items: center; white-space: nowrap; }
.t-drop { margin-left: 12px; }
.t-e { margin-left: 15px; }
.t-bt { margin-left: 30px; }
.t-wifi { margin-left: 22px; }
.t-pct { margin-left: 16px; font-size: 18px; }
.t-bat { margin-left: 7px; }
.t-time { margin-left: 30px; }
.t-user { margin-left: 24px; font-weight: 500; }
.t-find { margin: 0 24px; }

/* Browser window behind */
.browser {
  height: 65px;
  display: flex;
  align-items: flex-end;
  background: linear-gradient(#e6eaed, #e3e8eb 60%, #d5dadf);
  border-radius: 8px 8px 0 0;
  font: 17px/24px Inter, sans-serif;
  color: #6a6e72;
}
.lights { display: flex; gap: 12px; }
.lights i { width: 18px; height: 18px; border-radius: 50%; background: #ff5f57; }
.lights i:nth-child(2) { background: #ffbd3e; }
.lights i:nth-child(3) { background: #34c84a; }
.browser .idle { align-self: center; width: 117px; padding-left: 19px; flex: none; }
.idle i, .idle i:nth-child(2), .idle i:nth-child(3) { background: #dadada; border: 1px solid #d0d0d0; }
.btab {
  width: 359px;
  height: 53px;
  display: flex;
  align-items: center;
  gap: 11px;
  padding: 0 16px 2px 18px;
  position: relative;
}
.btab span { flex: 1; white-space: nowrap; }
.btab .fade { overflow: hidden; -webkit-mask-image: linear-gradient(90deg, #000 88%, transparent); }
.btab::after { content: ""; width: 1px; height: 29px; background: #9ea3a7; position: absolute; right: 0; top: 12px; }
.btab.last::after, .btab.active::after { display: none; }
.btab.active { background: linear-gradient(#fff 50%, #f1f1f1); border-radius: 12px 12px 0 0; }
.cal { font: 600 13px Inter, sans-serif; fill: #fff; }
.x { width: 14px; height: 14px; }
.newtab { width: 22px; height: 22px; margin: 0 22px 16px; }

.titlebar {
  height: 35px;
  display: flex;
  align-items: center;
  padding: 2px 0 0 12px;
  background: linear-gradient(#e6e6e6, #cdcdcd);
  border-top: 1px solid #c4c4c4;
  border-bottom: 1px solid #b0b0b0;
  border-radius: 8px 8px 0 0;
}
.titlebar .lights { width: 78px; }
h1 { flex: 1; padding-right: 90px; text-align: center; font: 19px/24px Inter, sans-serif; color: #484848; }

/* Toolbar */
.toolbar {
  height: 61px;
  display: flex;
  align-items: center;
  background: #f5f5f5;
  border-bottom: 2px solid #d0d0d0;
}
.group { height: 52px; display: flex; align-items: center; gap: 2px; border-right: 1px solid #d0d0d0; }
.group button { width: 48px; height: 45px; }
.group .mid { width: 44px; }
.group .slim { width: 38px; }
.group .on { background: #e4e4e4; }
.group .caret { width: 16px; margin-left: -2px; }
.caret::before { content: ""; border: 4px solid transparent; border-top: 6px solid #666; border-bottom: 0; }
.caret.dim::before { border-top-color: #b8b8b8; }
.g1 { width: 72px; padding-left: 12px; }
.g2 { width: 213px; padding-left: 9px; gap: 0; }
.g3 { width: 189px; padding-left: 7px; gap: 3px; }
.g4 { width: 165px; padding-left: 8px; gap: 0; }
.g5 { width: 408px; padding-left: 13px; gap: 4px; }
.g6 { width: 129px; padding-left: 13px; }
.g7 { padding-left: 10px; border: 0; }
.fit { position: relative; width: 148px; height: 34px; margin-left: 8px; }
.fit select { width: 100%; height: 100%; border: 2px solid #d8d8d8; border-radius: 2px; appearance: none; background: #f5f5f5; }
.fit::after { content: ""; position: absolute; right: 9px; top: 14px; border: 5px solid transparent; border-top: 6px solid #c8c8c8; border-bottom: 0; }
.showme { margin: 0 44px 0 auto; gap: 8px; color: #111; }

.main { flex: 1; display: flex; }

/* Left panel */
.side {
  width: 315px;
  flex: none;
  display: flex;
  flex-direction: column;
  background: #fafafa;
  border-right: 2px solid #d4d4d4;
}
h2 { font-weight: 700; line-height: 24px; color: #2b2b2b; }
.ptabs { display: flex; height: 42px; }
.ptab { width: 169px; padding: 0 0 4px 27px; justify-content: flex-start; }
.ptab.cur { font-weight: 700; color: #222; }
.ptab:not(.cur) { flex: 1; padding: 0 11px 2px 18px; justify-content: space-between; border: solid #d0d0d0; border-width: 0 0 2px 2px; }
.pv { padding: 18px 60px; border-bottom: 2px solid #d4d4d4; }
.dark { height: 34px; background: #666; color: #fff; border-radius: 2px; }
.light { height: 34px; background: #fff; border: 2px solid #d0d0d0; border-radius: 2px; }
.wide { width: 100%; }
.size { position: relative; height: 110px; padding: 11px 27px; border-bottom: 1px solid #d0d0d0; }
.size select {
  width: 260px;
  height: 36px;
  margin-top: 8px;
  padding: 0 2px;
  border: 0;
  border-bottom: 2px solid #d0d0d0;
  appearance: none;
  background: none;
}
.size::after { content: ""; position: absolute; right: 27px; top: 58px; border: 5px solid transparent; border-top: 6px solid #666; border-bottom: 0; pointer-events: none; }
.sheets { flex: 1; border-bottom: 1px solid #d0d0d0; }
.sheets h2 { padding: 10px 27px 19px; }
.sheets li { height: 30px; display: flex; align-items: center; padding: 0 0 2px 29px; gap: 12px; }
.sel { background: #e5e5e5; }
.sicon { position: relative; width: 24px; height: 20px; color: #777; }
.ok { position: absolute; left: 12px; top: 11px; width: 13px; height: 13px; }
.objects { padding: 10px 27px 29px; }
.objects ul { display: grid; grid-template-columns: 148px 1fr; grid-auto-rows: 36px; margin: 9px 0 21px; font-size: 16px; }
.objects li { display: flex; align-items: center; gap: 15px; white-space: nowrap; }
.objects li svg { fill: none; stroke: #666; stroke-width: 1.5px; }
.glyph { width: 22px; text-align: center; font-size: 27px; color: #666; }
.seg { display: flex; width: 258px; margin-bottom: 22px; }
.seg button { flex: 1; }
.check { display: flex; align-items: center; gap: 8px; white-space: nowrap; }
.check input { appearance: none; width: 22px; height: 22px; border: 2px solid #ccc; background: #fff; }
.check input:checked { display: grid; place-items: center; border-color: #777; }
.check input:checked::before { content: ""; width: 6px; height: 12px; border: solid #555; border-width: 0 2px 2px 0; transform: rotate(40deg); }

/* Device bar */
.work { flex: 1; min-width: 0; }
.device {
  height: 58px;
  display: flex;
  align-items: center;
  background: #fff;
  border: solid #d0d0d0;
  border-width: 0 2px 2px 1px;
  white-space: nowrap;
}
.device > * { flex: none; }
.dlabel { width: 192px; line-height: 56px; text-align: center; background: #f4f4f4; }
.dtype { width: 106px; margin-left: 27px; }
.dmodel { width: 61px; margin-left: 27px; }
.stepper { height: 34px; display: flex; border: 2px solid #d0d0d0; }
.stepper button { width: 18px; border-right: 1px solid #d0d0d0; }
.stepper span { flex: 1; padding-left: 9px; line-height: 30px; }
.stepper .next { border-right: 0; border-left: 1px solid #d0d0d0; }
.stepper button::before { content: ""; border: 5px solid transparent; border-right: 6px solid #555; border-left: 0; }
.stepper .next::before { border: 5px solid transparent; border-left: 6px solid #555; border-right: 0; }
.s1 { width: 183px; }
.s2 { width: 430px; }
.rotate { margin: 0 27px 0 28px; }
.add { width: 215px; margin-left: 37px; }

/* Dashboard canvas */
.frame {
  margin: 1px 286px 54px 23px;
  padding: 15px 15px 24px 14px;
  background: #fff;
  border: 3px solid #666;
  border-radius: 7px;
  font-family: "Noto Sans", sans-serif;
  color: #444;
}
h3 { line-height: 24px; font-size: 17px; font-weight: 600; color: #333; }
.legend { display: flex; height: 22px; margin: 7px 0 0 5px; line-height: 22px; overflow: hidden; white-space: nowrap; }
.legend li { width: 180px; flex: none; display: flex; gap: 8px; }
.legend i { width: 21px; height: 21px; flex: none; }
.bubbles { margin-top: 63px; }
.bubbles h3 { text-align: center; }
.regions { display: flex; overflow: hidden; margin-top: 4px; line-height: 28px; color: #777; border-bottom: 1px solid #d4d4d4; }
.regions span { width: 90px; flex: none; text-align: center; white-space: nowrap; }
.regions span:last-child { text-align: left; padding-left: 3px; }
.dots { width: 100%; }
.hscroll { height: 28px; padding: 9px 0 0 5px; border-top: 2px solid #d0d0d0; background: linear-gradient(#fff 4px, #e4e4e4 4px, #e4e4e4 5px, #f9f9f9 5px, #f9f9f9 24px, #e4e4e4 24px, #e4e4e4 25px, #fff 25px); }
.hscroll i { display: block; width: 86%; height: 13px; border-radius: 7px; background: #c1c1c1; }

/* Selected map zone */
.mapframe { position: relative; margin: 6px -4px 0 -8px; border: 3px solid #8c8f91; }
.drag { position: absolute; left: calc(50% - 37px); top: -19px; width: 74px; height: 17px; border-radius: 3px 3px 0 0; background: linear-gradient(transparent 5px, #e8e8e8 5px, #e8e8e8 7px, transparent 7px, transparent 10px, #e8e8e8 10px, #e8e8e8 12px, transparent 12px) no-repeat 7px 0 / 60px 17px, #8c8c8c; }
.dash {
  padding: 7px 5px;
  background:
    repeating-linear-gradient(90deg, #c3d0ea 0, #c3d0ea 15px, #fff 15px, #fff 18px) no-repeat top / 100% 2px,
    repeating-linear-gradient(90deg, #c3d0ea 0, #c3d0ea 15px, #fff 15px, #fff 18px) no-repeat bottom / 100% 2px;
}
.map { position: relative; border: 2px solid #ececec; height: 255px; }
.world { width: 100%; }
.note { position: absolute; left: 348px; top: 34px; width: 150px; height: 150px; padding: 48px 10px; text-align: center; font-size: 20px; line-height: 27px; color: #e15759; background: rgba(249, 249, 249, .94); }
.controls { position: absolute; left: 14px; top: 13px; width: 42px; }
.search { width: 42px; height: 42px; background: #f6f6f6; border: 2px solid #777; }
.zoom { display: flex; flex-direction: column; align-items: center; margin-top: 14px; height: 165px; padding-top: 2px; background: #f6f6f6; border: 2px solid #c0c0c0; color: #555; }
.zoom button { width: 34px; height: 34px; flex: none; }
.zoom .box { height: 33px; margin-top: 4px; border: 2px solid #bbb; border-radius: 2px; }
.zoom .pressed { background: #e4e4e4; }
.zoom hr { width: 30px; margin: 6px 0; border: 0; border-top: 2px solid #ddd; }
.map small { position: absolute; left: 7px; bottom: 3px; font: 12px/16px "Liberation Sans", sans-serif; color: #666; }
.actions { position: absolute; left: 100%; top: -3px; width: 30px; height: 126px; padding-top: 1px; background: #8e8e8e; border-radius: 0 3px 3px 0; color: #fff; }
.actions button { width: 30px; height: 31px; }

/* Residence bars */
.res { margin-top: 9px; color: #777; }
.rhead { display: grid; grid-template-columns: 150px 1fr; padding-left: 9px; margin-right: 28px; border-bottom: 1px solid #ddd; white-space: nowrap; }
.rbody { display: grid; grid-template-columns: 361px 1fr 24px; }
.rlabels { display: grid; grid-template-columns: 150px 1fr; padding-left: 9px; line-height: 30px; border-bottom: 2px solid #d0d0d0; }
.rlabels > span { line-height: 26px; }
.plot {
  margin-right: 4px;
  padding: 4px 0 0;
  border: solid #d0d0d0;
  border-width: 0 2px 2px 0;
  background: repeating-linear-gradient(90deg, #e9e9e9 0, #e9e9e9 1px, transparent 1px, transparent 9.84%);
}
.bar { display: flex; height: 22px; margin-bottom: 8px; }
.plot .bar:last-child { margin-bottom: 7px; }
.vscroll { background: #f9f9f9; border: solid #e6e6e6; border-width: 0 1px; padding: 4px 5px; }
.vscroll i { display: block; height: 27px; border-radius: 6px; background: #c1c1c1; }
.afoot { margin: 0 28px 0 361px; height: 7px; background: repeating-linear-gradient(90deg, #e9e9e9 0, #e9e9e9 1px, transparent 1px, transparent 9.84%); }
.sliver { height: 1px; margin: 0; opacity: .5; }
.axis { display: grid; grid-template-columns: 547fr repeat(9, 1094fr) 727fr; margin: 4px 28px 0 361px; text-align: center; }
.axis span:first-child { text-align: left; padding-left: 2px; }
.axis span:last-child { text-align: right; padding-right: 3px; }
.atitle { display: flex; align-items: center; justify-content: center; gap: 11px; height: 56px; margin: 12px 0 0 388px; }
.atitle em { font: italic 27px/40px Zapfino, "Liberation Serif", serif; color: #e15759; }

.date { margin-top: 28px; }
.drow { display: flex; align-items: center; margin: 6px 7px 0 5px; }
.drow input[type="text"] { width: 50%; height: 30px; padding: 0 3px; border: 2px solid #999; background: #fff; font-size: 16px; }
.range {
  flex: 1;
  height: 22px;
  margin: 0 7px 0 8px;
  appearance: none;
  background:
    linear-gradient(#e6e6e6, #e6e6e6) no-repeat 7px 7px / 100% 6px,
    repeating-linear-gradient(90deg, #c4c4c4 0, #c4c4c4 1px, transparent 1px, transparent 33px) no-repeat 7px 15px / 100% 4px;
}
.range::-webkit-slider-thumb { appearance: none; width: 14px; height: 14px; margin-top: -2px; border: 2px solid #777; border-radius: 50%; background: #fff; }
.drow button { width: 24px; height: 24px; border: 2px solid #ccc; background: #fff; }
.drow button + button { margin-left: 4px; }

/* Sheet tabs */
.stabs { display: flex; height: 46px; background: #e5e5e5; border-top: 2px solid #dadada; border-bottom: 1px solid #ccc; color: #606060; font-size: 19px; }
.stabs button { padding: 0 9px; border-right: 2px solid #ccc; white-space: nowrap; }
.stabs .src { width: 197px; padding-left: 14px; gap: 9px; justify-content: flex-start; }
.stabs .cur { background: #fafafa; font-weight: 700; color: #555; gap: 7px; padding: 0 12px; }
.stabs .new { width: 47px; }

/* Status bar */
.status { display: flex; align-items: stretch; height: 32px; padding-left: 18px; background: #ebebeb; color: #111; font: 16px/31px Roboto, sans-serif; white-space: nowrap; }
.status p { margin-right: 22px; }
.cell { display: flex; align-items: center; border-left: 2px solid #ccc; padding-left: 9px; }
.user { width: 190px; margin-left: auto; padding-right: 12px; gap: 14px; }
.user span { flex: 1; }
.c40 { width: 41px; }
.c70 { width: 70px; }
.pager { width: 107px; padding-left: 11px; }
.views { width: 115px; padding-left: 12px; }
```
